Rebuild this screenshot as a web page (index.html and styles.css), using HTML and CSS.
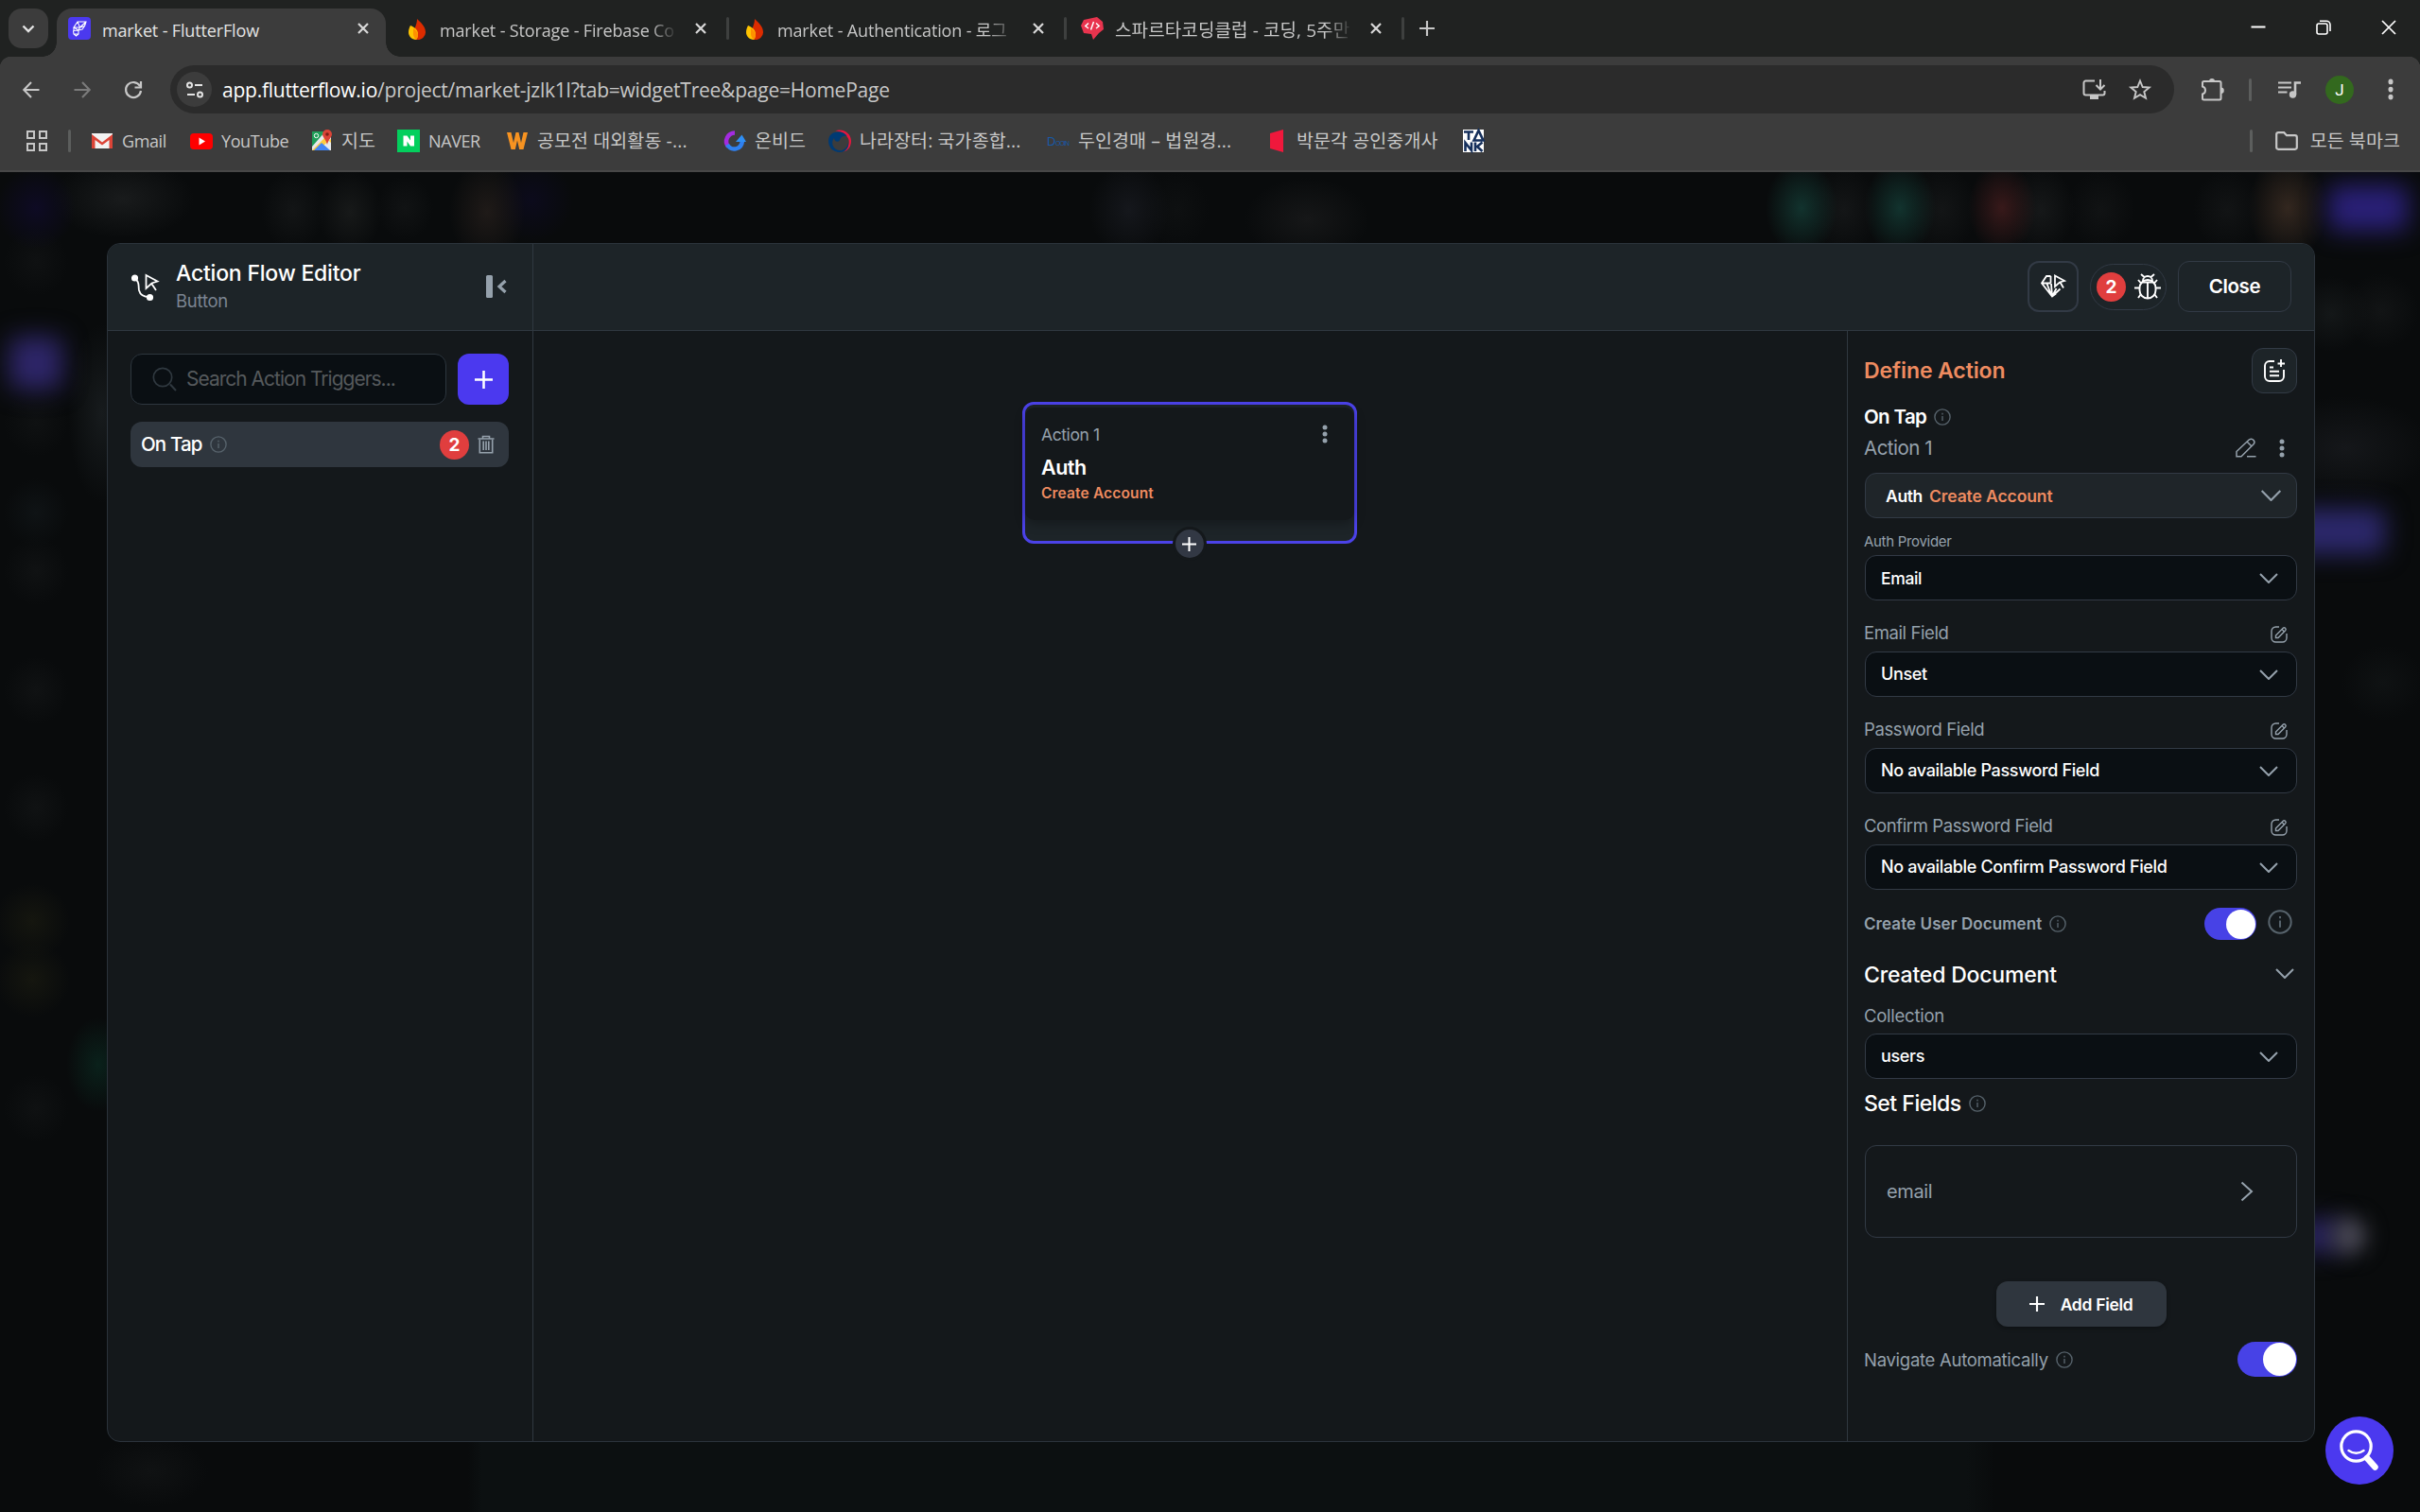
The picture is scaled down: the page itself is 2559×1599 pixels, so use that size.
FILE: index.html
```html
<!DOCTYPE html>
<html lang="ko">
<head>
<meta charset="utf-8">
<title>market - FlutterFlow</title>
<link rel="stylesheet" href="styles.css">
</head>
<body>
<svg class="defs" width="0" height="0" aria-hidden="true">
  <symbol id="x" viewBox="0 0 14 14"><path d="M2 2l10 10M12 2L2 12" fill="none" stroke="currentColor" stroke-width="2.2"/></symbol>
  <symbol id="fire" viewBox="0 0 18 22"><path d="M9 0c4 4 9 8 9 14a8 8 0 0 1-9 8c-3 0-4-2-4-5C5 11 9 7 9 0z" fill="#dd2c00"/><path d="M2 7c5 2 8 5 8 9 0 3-1 5-2 6-5 0-8-4-8-8 0-3 1-5 2-7z" fill="#ffc400"/><path d="M5 10c3 2 5 4 5 7 0 2-1 4-2 5-2-2-3-4-3-6z" fill="#ff9100"/></symbol>
  <symbol id="info" viewBox="0 0 18 18"><circle cx="9" cy="9" r="8.1" fill="none" stroke="currentColor" stroke-width="1.4"/><path d="M9 8v5M9 4.8v1.6" stroke="currentColor" stroke-width="1.4"/></symbol>
  <symbol id="down" viewBox="0 0 20 11"><path d="M1 1l9 9 9-9" fill="none" stroke="currentColor" stroke-width="2"/></symbol>
  <symbol id="plus" viewBox="0 0 18 18"><path d="M9 0v18M0 9h18" stroke="currentColor" stroke-width="2.4"/></symbol>
  <symbol id="dots" viewBox="0 0 6 20"><circle cx="3" cy="3" r="2.5" fill="currentColor"/><circle cx="3" cy="10" r="2.5" fill="currentColor"/><circle cx="3" cy="17" r="2.5" fill="currentColor"/></symbol>
  <symbol id="edit" viewBox="0 0 18 18"><path d="M9 1H5.500A4.500 4.500 0 0 0 1 5.500v7A4.500 4.500 0 0 0 5.500 17h7a4.500 4.500 0 0 0 4.500-4.500V8M5.500 12.500V10L13.200 2.200c1.500-1.400 3.900 1 2.500 2.500L8 12.500zM12 3.500L14.500 6" fill="none" stroke="currentColor" stroke-width="1.4"/></symbol>
</svg>

<div class="screen">
  <header class="tabstrip">
    <div class="tab-search"><svg width="14" height="9" viewBox="0 0 14 9"><path d="M1.500 1.500L7 7l5.500-5.500" fill="none" stroke="#e3e3e3" stroke-width="2.400"/></svg></div>
    <div class="tab active">
      <svg class="fav" viewBox="0 0 24 24"><rect width="24" height="24" rx="4" fill="#4b39ef"/><path d="M10 5h9l-1.500 4.500-5 1.500H6zM10 5L6 11v3.500l5-.5 1.500-3L10 5M12.500 11L19 5M5.500 14.500L6 18l2.500 2 2.500-2v-4M6 18h5M6 11l5 3 4-1 2.500-3.500" fill="none" stroke="#fff" stroke-width="1.100"/></svg>
      <span class="title ttl-1">market - FlutterFlow</span>
      <svg class="tab-x"><use href="#x"/></svg>
    </div>
    <div class="tab">
      <svg class="fav"><use href="#fire" x="3" y="2" width="18" height="22"/></svg>
      <span class="title fade">market - Storage - Firebase Co</span>
      <svg class="tab-x"><use href="#x"/></svg>
    </div>
    <div class="tab">
      <svg class="fav"><use href="#fire" x="3" y="2" width="18" height="22"/></svg>
      <span class="title fade">market - Authentication - 로그</span>
      <svg class="tab-x"><use href="#x"/></svg>
    </div>
    <div class="tab">
      <svg class="fav" viewBox="0 0 24 24"><path d="M3 3L17 0l6 5 1 8-5 4-6 7-2-6-8-1-3-8z" fill="#e8344e"/><path d="M8 6.500L4.800 9.500 8 12M16 6.500l3.200 3L16 12M13.500 5l-3 8.500" fill="none" stroke="#fff" stroke-width="1.500"/></svg>
      <span class="title fade ko">스파르타코딩클럽 - 코딩, 5주만</span>
      <svg class="tab-x"><use href="#x"/></svg>
    </div>
    <svg class="new-tab" width="16" height="16"><use href="#plus"/></svg>
    <div class="win">
      <svg width="16" height="16" viewBox="0 0 16 16"><path d="M.5 7.500h15" stroke="#fff" stroke-width="2"/></svg>
      <svg width="16" height="16" viewBox="0 0 16 16"><path d="M1 6a2 2 0 0 1 2-2h7a2 2 0 0 1 2 2v7a2 2 0 0 1-2 2H3a2 2 0 0 1-2-2zM4 1.200h7A4 4 0 0 1 15 5v7" fill="none" stroke="#fff" stroke-width="1.600"/></svg>
      <svg width="16" height="16" viewBox="0 0 16 16"><path d="M1 1l14 14M15 1L1 15" stroke="#fff" stroke-width="1.700"/></svg>
    </div>
  </header>

  <div class="toolbar">
    <nav class="nav">
      <svg viewBox="0 0 18 18"><path d="M17.500 9H1.500M9 1L1.300 9 9 17" fill="none" stroke="#c7c7c7" stroke-width="2.100"/></svg>
      <svg viewBox="0 0 18 18"><path d="M.5 9h16M9 1l7.700 8L9 17" fill="none" stroke="#7b7b7b" stroke-width="2.100"/></svg>
      <svg viewBox="0 0 18 18"><path d="M16 5A8 8 0 1 0 17 10M17 0v6.500h-6.500" fill="none" stroke="#c7c7c7" stroke-width="2.200"/></svg>
    </nav>
    <div class="omnibox">
      <div class="site"><svg width="18" height="18" viewBox="0 0 18 18" fill="none" stroke="#e3e3e3" stroke-width="2"><circle cx="3.500" cy="4" r="2.500"/><path d="M9 4h8M1 14h8"/><circle cx="14.500" cy="14" r="2.500"/></svg></div>
      <div class="url"><b>app.flutterflow.io</b>/project/market-jzlk1l?tab=widgetTree&amp;page=HomePage</div>
      <svg class="install" width="25" height="22" viewBox="0 0 25 22"><path d="M13 1.500H3.500A2 2 0 0 0 1.500 3.500v11a2 2 0 0 0 2 2h18a2 2 0 0 0 2-2V12M19 0v10M14.500 6l4.500 4.500L23.500 6" fill="none" stroke="#c7c7c7" stroke-width="2"/><path d="M8 17h9v4H8z" fill="#c7c7c7"/></svg>
      <svg class="star" width="24" height="23" viewBox="0 0 24 23"><path d="M12 2.500l2.700 6.500 7 .5-5.400 4.500 1.700 6.800-6-3.700-6 3.700 1.700-6.800L2.300 9.500l7-.5z" fill="none" stroke="#c7c7c7" stroke-width="1.900"/></svg>
    </div>
    <div class="tools">
      <svg class="t-ext" width="26" height="25" viewBox="0 0 26 25"><path d="M3.500 4H20a1.500 1.500 0 0 1 1.500 1.500V22a1.500 1.500 0 0 1-1.500 1.500H3.500A1.500 1.500 0 0 1 2 22v-4.500c4-1 4-7 0-8V5.500A1.500 1.500 0 0 1 3.500 4z" fill="none" stroke="#c7c7c7" stroke-width="2"/><path d="M9 4a3 3 0 0 1 6 0zM21.500 10.500a3 3 0 0 1 0 6.500z" fill="#c7c7c7"/></svg>
      <i class="bar"></i>
      <svg class="t-music" width="24" height="18" viewBox="0 0 24 18"><path d="M0 1.500h14M0 6.500h14M0 11.500h9.500" stroke="#c7c7c7" stroke-width="2"/><circle cx="15.500" cy="14" r="3.700" fill="#c7c7c7"/><path d="M18 14V1.500h6" fill="none" stroke="#c7c7c7" stroke-width="2.600"/></svg>
      <span class="avatar">J</span>
      <svg class="t-dots" width="6" height="23" viewBox="0 0 6 20" preserveAspectRatio="none"><use href="#dots"/></svg>
    </div>
  </div>

  <div class="bookmarks">
    <svg class="apps" width="22" height="22" viewBox="0 0 22 22" fill="none" stroke="#c7c7c7" stroke-width="2"><path d="M1 1h7v7H1zM14 1h7v7h-7zM1 14h7v7H1zM14 14h7v7h-7z"/></svg>
    <i class="bar"></i>
    <div class="marks">
      <span><svg viewBox="0 0 24 24"><path d="M1 4h22v16H1z" fill="#f2f2f2"/><path d="M1 20V5l11 8.500L23 5v15h-3.500V11L12 16.500 4.500 11v9z" fill="#db4437"/></svg><em class="g">Gmail</em></span>
      <span><svg viewBox="0 0 24 24"><rect y="4" width="24" height="17" rx="4" fill="#f00"/><path d="M9.500 8.500v8l6.500-4z" fill="#fff"/></svg><em class="g">YouTube</em></span>
      <span><svg viewBox="0 0 24 24"><path d="M2 2h20v20H2z" fill="#e8eaed"/><path d="M2 2h14L2 18z" fill="#1e9e58"/><path d="M2 22L16 8l6 6v-4L8 22z" fill="#ffcd40"/><path d="M4 22l8-8 9 8z" fill="#4285f4"/><path d="M18 0a5 5 0 0 1 5 5c0 3-4 6-5 11-1-5-5-8-5-11a5 5 0 0 1 5-5z" fill="#db4437"/><circle cx="18" cy="5" r="1.800" fill="#7c1f17"/><circle cx="6.500" cy="6.500" r="2.200" fill="none" stroke="#fff"/></svg><em>지도</em></span>
      <span><svg viewBox="0 0 24 24"><path d="M0 0h24v24H0z" fill="#03cf5d"/><path d="M6.500 6.500h4l3.500 5v-5h4v11h-4l-3.500-5v5h-4z" fill="#fff"/></svg><em class="g">NAVER</em></span>
      <span><svg viewBox="0 0 24 24"><path d="M1 3h4.500l2.500 11 2.500-11h3L16 14l2.500-11H23l-4.500 18h-4.300L12 11.500 9.800 21H5.500z" fill="#f79321"/></svg><em>공모전 대외활동 -...</em></span>
      <span><svg viewBox="0 0 24 24"><path d="M12 3.500A9 9 0 0 0 5 18" fill="none" stroke="#a32be0" stroke-width="4.500"/><path d="M4 16c4 7 15 6 16-4" fill="none" stroke="#2f80f0" stroke-width="4.500"/><path d="M13 13l6.500-7.500L24 13z" fill="#2f8ff5"/></svg><em>온비드</em></span>
      <span><svg viewBox="0 0 24 24"><path d="M7 1.500C14-2 24 3 24 12c0 6-3 10-8 11.500 5-4 7-9 5-14-3-6-9-8-14-8z" fill="#e5173f"/><path d="M5 3.500C11 1 18 3 19.500 7c-4-1-6.500 1-7.500 4-1 3-6 2-6-2-4 5-1 12 5 13 5 1 9-3 10-8 1 6-4 10-9 10C5 24 0 19 0 12c0-4 2-7 5-8.500z" fill="#003a73"/></svg><em>나라장터: 국가종합...</em></span>
      <span><svg viewBox="0 0 24 24"><text x="0" y="17" font-size="13" fill="#1859a8" font-family="Liberation Sans">D</text><text x="9" y="17" font-size="7" fill="#1859a8" font-family="Liberation Sans" textLength="15">OOIN</text></svg><em>두인경매 – 법원경...</em></span>
      <span><svg viewBox="0 0 24 24"><path d="M5 4l14-4v24L5 20z" fill="#f0183c"/></svg><em>박문각 공인중개사</em></span>
      <span><svg viewBox="0 0 24 24"><path d="M1 0h22v24H1z" fill="#fff"/><path d="M2 2.500h10M7 2.500V11M12.500 11.500L17.500 1l5 10.500zM3.500 23V14l6.500 8v-8.500M14 13.500V23M21.500 13.500L16 18l5.500 5" fill="none" stroke="#16305c" stroke-width="2.600"/></svg></span>
    </div>
    <i class="bar right"></i>
    <svg class="folder" width="24" height="20" viewBox="0 0 24 20"><path d="M1.200 3a2 2 0 0 1 2-1.800h6l2.800 3h8.800a2 2 0 0 1 2 2V17a2 2 0 0 1-2 1.800H3.200a2 2 0 0 1-2-1.800z" fill="none" stroke="#c7c7c7" stroke-width="2.200"/></svg>
    <em class="all">모든 북마크</em>
  </div>

  <main class="backdrop">
    <i class="ghost g-nav"></i><i class="ghost g-run"></i><i class="ghost g-tab"></i><i class="ghost g-switch"></i><i class="ghost g-knob"></i>
    <section class="dialog">
      <aside class="side">
        <div class="side-head">
          <svg width="30" height="30" viewBox="0 0 30 30" fill="none" stroke="#fff" stroke-width="1.800"><circle cx="4.500" cy="5" r="2.700" fill="#fff"/><circle cx="20.500" cy="25.500" r="2.700" fill="#fff"/><path d="M5 6c5 3 3 7 4 12 1 4 5 7 11 7M16.500 2l12 6.500-6 2-6 5.500zM22 10.500l5 7.500"/></svg>
          <div class="heads"><h1>Action Flow Editor</h1><p>Button</p></div>
          <svg class="collapse" width="22" height="26" viewBox="0 0 22 26"><rect x="0" y="1" width="7" height="24" rx="1.500" fill="#95a1ac"/><path d="M20.500 7l-6.500 6 6.500 6" fill="none" stroke="#95a1ac" stroke-width="3.200"/></svg>
        </div>
        <div class="side-body">
          <div class="search-row">
            <div class="search"><svg width="26" height="26" viewBox="0 0 26 26"><path d="M19 18.500l6 6.500" stroke="#2f383f" stroke-width="2"/><circle cx="11" cy="11" r="9.700" fill="none" stroke="#2f383f" stroke-width="1.700"/></svg><span>Search Action Triggers...</span></div>
            <button class="add"><svg width="19" height="19"><use href="#plus"/></svg></button>
          </div>
          <div class="trigger"><span>On Tap</span><svg class="i dim"><use href="#info"/></svg><b class="badge">2</b><svg class="trash" width="18" height="20" viewBox="0 0 18 20" fill="none" stroke="#95a1ac" stroke-width="1.600"><path d="M.5 4h17M5.500 4V1.500h7V4M2.300 5v13.800h13.400V5M6.200 6.500v9.500M9 6.500v9.500M11.800 6.500v9.500"/></svg></div>
        </div>
      </aside>
      <div class="work">
        <div class="work-head">
          <button class="sq"><svg width="26" height="26" viewBox="0 0 26 26" fill="none" stroke="#fff" stroke-width="1.800"><path d="M10.500 2H6L1 9.500l11 14 4-3M1 9.500h9.500M10.500 2v7.500M6.500 10l5 13M11 10l1 13.500M15 1.500l10 5.500-5 1.500-5 4.500zM20.500 8.500l3.500 6M16.500 15L12 23.500 20.500 15.500"/></svg></button>
          <div class="pill"><b class="badge">2</b><svg width="28" height="28" viewBox="0 0 28 28" fill="none" stroke="#fff" stroke-width="1.900"><rect x="5.500" y="7" width="17" height="19.500" rx="8.500"/><path d="M14 9v17M9 8a5 5 0 0 1 10 0M7 1l3.500 3M21 1l-3.500 3M0 15.500h5.500M22.500 15.500H28M7 10.500L4 7M21 10.500L24 7M7 22l-3 4M21 22l3 4M8 9.500h12"/></svg></div>
          <button class="close">Close</button>
        </div>
        <div class="work-body">
          <div class="canvas">
            <div class="node">
              <div class="node-in">
                <div class="node-top"><span>Action 1</span><svg width="6" height="20"><use href="#dots"/></svg></div>
                <h2>Auth</h2>
                <h3>Create Account</h3>
              </div>
              <span class="node-add"><svg width="15" height="15"><use href="#plus"/></svg></span>
            </div>
          </div>
          <div class="panel">
            <div class="define"><span>Define Action</span><button><svg width="24" height="24" viewBox="0 0 24 24" fill="none" stroke="#fff" stroke-width="1.900"><path d="M12 2H7a5 5 0 0 0-5 5v11a5 5 0 0 0 5 5h10a5 5 0 0 0 5-5V11M19 0v8M15.500 4.500H23M7 8.500h4M7 12.800h10M7 17.300h10"/></svg></button></div>
            <div class="row r-tap"><span>On Tap</span><svg class="i"><use href="#info"/></svg></div>
            <div class="row r-action"><span>Action 1</span><svg class="pen" width="22" height="21" viewBox="0 0 22 21" fill="none" stroke="#95a1ac" stroke-width="1.500"><path d="M1 14.500L14.500 1.800c3.500-2 7 2 4.500 5L6 19.800H1zM12 4l5 5M12 19.800h9.500"/></svg><svg width="6" height="20"><use href="#dots"/></svg></div>
            <div class="box act"><span>Auth</span><em>Create Account</em><svg class="chev big"><use href="#down"/></svg></div>
            <div class="label small"><span>Auth Provider</span></div>
            <div class="box"><span class="v1">Email</span><svg class="chev"><use href="#down"/></svg></div>
            <div class="label"><span>Email Field</span><svg class="i"><use href="#edit"/></svg></div>
            <div class="box"><span>Unset</span><svg class="chev"><use href="#down"/></svg></div>
            <div class="label"><span>Password Field</span><svg class="i"><use href="#edit"/></svg></div>
            <div class="box"><span>No available Password Field</span><svg class="chev"><use href="#down"/></svg></div>
            <div class="label"><span>Confirm Password Field</span><svg class="i"><use href="#edit"/></svg></div>
            <div class="box"><span>No available Confirm Password Field</span><svg class="chev"><use href="#down"/></svg></div>
            <div class="row r-create"><span>Create User Document</span><svg class="i"><use href="#info"/></svg><i class="toggle t1"></i><svg class="i lg"><use href="#info"/></svg></div>
            <div class="row r-created"><span>Created Document</span><svg class="chev"><use href="#down"/></svg></div>
            <div class="label coll"><span>Collection</span></div>
            <div class="box"><span>users</span><svg class="chev"><use href="#down"/></svg></div>
            <div class="row r-set"><span>Set Fields</span><svg class="i"><use href="#info"/></svg></div>
            <div class="box field"><span>email</span><svg width="14" height="22" viewBox="0 0 14 22"><path d="M1.500 1.500L12 11 1.500 20.500" fill="none" stroke="#95a1ac" stroke-width="2"/></svg></div>
            <button class="add-field"><svg width="16" height="16"><use href="#plus"/></svg>Add Field</button>
            <div class="row r-nav"><span>Navigate Automatically</span><svg class="i"><use href="#info"/></svg><i class="toggle t2"></i></div>
          </div>
        </div>
      </div>
    </section>
    <span class="fab"><svg width="42" height="44" viewBox="0 0 42 44" fill="none" stroke="#fff" stroke-linecap="round"><circle cx="17.500" cy="17.500" r="15.700" stroke-width="3.200"/><path d="M9.500 22q8 5.500 16 0" stroke-width="2.400"/><path d="M29 30l8.500 9.500" stroke-width="6.500"/></svg></span>
  </main>
</div>
</body>
</html>
```
FILE: styles.css
```css
* { box-sizing: border-box; }
body { margin: 0; background: #090b0c; overflow: hidden; }
svg { display: block; flex: none; overflow: visible; }
.defs { position: absolute; }
h1, h2, h3, p { margin: 0; }
em, i { font-style: normal; }
button { border: 0; padding: 0; font: inherit; color: inherit; background: none; }
.screen { width: 2559px; height: 1599px; display: flex; flex-direction: column; font-family: "Open Sans", "Noto Sans CJK KR", sans-serif; }

/* Browser tabs */
.tabstrip { height: 60px; background: #202221; display: flex; align-items: flex-start; padding-left: 9px; }
.tab-search { width: 42px; height: 42px; margin: 9px 9px 0 0; border-radius: 14px; background: #3c3c3c; display: flex; align-items: center; justify-content: center; }
.tab { position: relative; width: 357px; height: 51px; margin-top: 9px; padding: 9px 21px 0 12px; display: flex; gap: 12px; }
.tab::after { content: ""; position: absolute; left: 351px; top: 9px; width: 3px; height: 24px; border-radius: 2px; background: #3e403f; }
.tab.active { width: 348px; margin-right: 9px; padding-right: 12px; background: #3c3c3c; border-radius: 16px 16px 0 0; }
.tab.active::before, .tab.active::after { content: ""; position: absolute; top: auto; bottom: 0; width: 15px; height: 15px; border-radius: 0; background: radial-gradient(circle at 0 0, transparent 14.5px, #3c3c3c 15px); }
.tab.active::before { left: -15px; }
.tab.active::after { left: auto; right: -15px; transform: scaleX(-1); }
.fav { width: 24px; height: 24px; }
.title { width: 252px; flex: none; height: 32px; line-height: 29px; font-size: 18px; letter-spacing: -.15px; color: #c7c7c7; white-space: nowrap; overflow: hidden; }
.ttl-1 { color: #e3e3e3; }
.ko { font-size: 19px; letter-spacing: .1px; }
.fade { -webkit-mask-image: linear-gradient(90deg, #000 88%, transparent); mask-image: linear-gradient(90deg, #000 88%, transparent); }
.tab-x { width: 14px; height: 14px; margin: 5px; color: #d8d8d8; }
.new-tab { margin: 22px 0 0 13px; color: #c7c7c7; }
.win { margin: 21px 25px 0 auto; display: flex; gap: 53px; }

/* Address row */
.toolbar { height: 69px; flex: none; display: flex; align-items: flex-start; padding-top: 9px; background: radial-gradient(circle at 12px 12px, #3c3c3c 12px, transparent 12.5px) 0 0 / 12px 12px no-repeat, radial-gradient(circle at 0 12px, #3c3c3c 12px, transparent 12.5px) 100% 0 / 12px 12px no-repeat, linear-gradient(#3c3c3c, #3c3c3c) 0 12px / 100% 100% no-repeat, linear-gradient(#3c3c3c, #3c3c3c) 12px 0 / 2535px 12px no-repeat, #202221; }
.nav { width: 180px; display: flex; gap: 36px; padding: 17px 0 0 24px; }
.nav svg { width: 18px; height: 18px; }
.omnibox { width: 2119px; height: 51px; border-radius: 26px; background: #2b2b2b; display: flex; align-items: center; padding-left: 7px; }
.site { width: 37px; height: 37px; border-radius: 50%; background: #3c3c3c; display: flex; align-items: center; justify-content: center; }
.url { margin-left: 11px; font-size: 21px; letter-spacing: -.23px; color: #c7c7c7; white-space: nowrap; }
.url b { font-weight: 400; color: #fff; }
.install { margin-left: auto; }
.star { margin: 0 24px; }
.tools { display: flex; align-items: center; height: 51px; padding-left: 28px; }
.bar { width: 3px; height: 24px; border-radius: 2px; background: #5c5e5d; flex: none; }
.t-music { margin-left: 28px; }
.tools .bar { margin-left: 25px; }
.avatar { width: 30px; height: 30px; margin-left: 26px; border-radius: 50%; background: #33691e; color: #fff; font: 17px/30px Roboto, sans-serif; text-align: center; }
.t-dots { margin-left: 36px; color: #c7c7c7; }

/* Bookmarks */
.bookmarks { height: 53px; flex: none; display: flex; align-items: center; padding: 0 21px 11px 28px; background: #3c3c3c; border-bottom: 2px solid #474747; }
.bookmarks em { font-size: 19.5px; color: #c7c7c7; line-height: 26px; white-space: nowrap; letter-spacing: .1px; }
.bookmarks .g { font-size: 18px; letter-spacing: -.4px; }
.apps { margin-right: 22px; }
.marks { flex: 1; margin-left: 21px; display: grid; grid-template-columns: 105px 127px 92px 115px 230px 111px 231px 231px 208px 24px; }
.marks span { display: flex; align-items: center; gap: 9px; }
.marks svg { width: 24px; height: 24px; }
.folder { margin: 0 13px 0 24px; }

/* Dimmed, blurred editor behind the dialog */
.backdrop {
  position: relative; flex: 1; padding: 75px 0 0 113px; overflow: hidden;
  background:
    radial-gradient(42px 44px at 38px 38px, #0e0b24, transparent),
    radial-gradient(75px 42px at 130px 28px, #191b1c, transparent),
    radial-gradient(34px 42px at 310px 40px, #131516, transparent),
    radial-gradient(34px 44px at 370px 42px, #171919, transparent),
    radial-gradient(30px 34px at 428px 38px, #111314, transparent),
    radial-gradient(40px 56px at 515px 42px, #1f1a18, transparent),
    radial-gradient(44px 44px at 562px 30px, #0c0b1c, transparent),
    radial-gradient(36px 95px at 108px 255px, #171b1d, transparent),
    radial-gradient(34px 36px at 38px 95px, #0f1112, transparent),
    radial-gradient(34px 36px at 38px 265px, #0f1112, transparent),
    radial-gradient(34px 36px at 38px 360px, #0f1315, transparent),
    radial-gradient(34px 36px at 38px 422px, #101213, transparent),
    radial-gradient(34px 36px at 38px 548px, #101213, transparent),
    radial-gradient(34px 36px at 38px 672px, #101213, transparent),
    radial-gradient(40px 40px at 34px 792px, #15160f, transparent),
    radial-gradient(40px 40px at 34px 854px, #15160f, transparent),
    radial-gradient(34px 36px at 38px 990px, #0f1112, transparent),
    radial-gradient(34px 50px at 104px 944px, #0a211b, transparent),
    radial-gradient(60px 38px at 160px 1374px, #101213, transparent),
    radial-gradient(42px 50px at 1194px 40px, #15171c, transparent),
    radial-gradient(34px 40px at 1245px 40px, #0e1011, transparent),
    radial-gradient(66px 44px at 1382px 50px, #161718, transparent),
    radial-gradient(38px 50px at 1905px 38px, #12332e, transparent),
    radial-gradient(36px 46px at 1950px 40px, #141617, transparent),
    radial-gradient(38px 50px at 2009px 38px, #12332e, transparent),
    radial-gradient(36px 46px at 2054px 40px, #131516, transparent),
    radial-gradient(36px 48px at 2117px 38px, #38191a, transparent),
    radial-gradient(36px 46px at 2158px 40px, #161819, transparent),
    radial-gradient(36px 42px at 2222px 40px, #111314, transparent),
    radial-gradient(36px 42px at 2355px 40px, #121415, transparent),
    radial-gradient(42px 56px at 2419px 38px, #33271f, transparent),
    radial-gradient(40px 40px at 2465px 150px, #141718, transparent),
    radial-gradient(40px 40px at 2518px 147px, #121415, transparent),
    radial-gradient(90px 55px at 2480px 292px, #15171a, transparent),
    radial-gradient(44px 40px at 2520px 540px, #0f1213, transparent),
    linear-gradient(90deg, transparent 495px, #0c1011 510px 2080px, transparent 2110px) 0 1300px / 100% 117px no-repeat,
    #090b0c;
}
.ghost { position: absolute; filter: blur(13px); }
.g-nav { left: 10px; top: 174px; width: 56px; height: 56px; border-radius: 10px; background: #2e2669; }
.g-run { left: 2462px; top: 14px; width: 84px; height: 48px; border-radius: 8px; background: #2a2078; }
.g-tab { left: 2400px; top: 356px; width: 122px; height: 48px; border-radius: 8px; background: #2c286c; }
.g-switch { left: 2410px; top: 1108px; width: 66px; height: 34px; background: #29235e; }
.g-knob { left: 2466px; top: 1106px; width: 36px; height: 38px; border-radius: 50%; background: #4b4a56; filter: blur(11px); }

/* Dialog */
.dialog { position: relative; width: 2335px; height: 1268px; border: 1px solid #2b333b; border-radius: 14px; overflow: hidden; display: flex; background: #14181b; color: #fff; font-family: Inter, "Noto Sans", sans-serif; }
.side { width: 450px; flex: none; border-right: 1px solid #2f3840; }
.side-head, .work-head { height: 92px; background: #1d2428; border-bottom: 1px solid #2f3840; display: flex; align-items: center; }
.side-head { padding: 0 27px 0 24px; }
.heads { margin: -1px 0 0 18px; }
h1 { font-size: 23px; line-height: 30px; font-weight: 500; letter-spacing: -.21px; }
p { font-size: 18.5px; line-height: 28px; color: #7b8491; letter-spacing: -.25px; }
.collapse { margin: -2px 0 0 auto; }
.side-body { padding: 24px; }
.search-row { display: flex; gap: 12px; }
.search { width: 334px; height: 54px; border: 1px solid #2d363e; border-radius: 12px; background: #0a0f13; display: flex; align-items: center; padding: 0 0 1px 22px; gap: 10px; color: #55595c; font-size: 21px; letter-spacing: -1px; white-space: nowrap; }
.add { width: 54px; height: 54px; border-radius: 12px; background: #4b39ef; display: grid; place-items: center; }
.trigger { width: 400px; margin-top: 18px; height: 48px; border-radius: 12px; background: #2f363e; display: flex; align-items: center; padding: 0 15px 0 12px; font-size: 20.5px; font-weight: 500; letter-spacing: -.85px; }
.i { width: 18px; height: 18px; color: #57636c; }
.trigger span { margin: -2px 0 0 -1px; }
.trigger .i { margin-left: 8px; }
.badge { width: 31px; height: 31px; border-radius: 50%; background: #e03e3e; font-size: 19px; line-height: 31px; font-weight: 700; letter-spacing: 0; text-align: center; }
.trigger .badge { margin-left: auto; margin-right: 9px; }

.work { flex: 1; display: flex; flex-direction: column; }
.work-head { justify-content: flex-end; padding-right: 24px; gap: 12px; padding-bottom: 1px; }
.sq { width: 54px; height: 54px; border: 2px solid #323a45; border-radius: 12px; display: grid; place-items: center; }
.pill { width: 81px; height: 49px; border: 1px solid #323a45; border-radius: 25px; display: flex; align-items: center; padding-left: 6px; gap: 9px; }
.close { width: 120px; height: 54px; border: 1px solid #323a45; border-radius: 12px; font-size: 20.5px; font-weight: 600; letter-spacing: -.4px; padding-bottom: 2px; }
.work-body { flex: 1; display: flex; }

.canvas { flex: 1; display: flex; justify-content: center; align-items: flex-start; padding: 75px 1px 0 0; }
.node { position: relative; width: 354px; height: 150px; border: 3px solid #4b42e8; border-radius: 12px; background: #1d2428; padding-top: 3px; }
.node-in { height: 119px; border-radius: 10px; background: #14181b; box-shadow: 0 4px 12px rgba(0, 0, 0, .3); padding: 16px 28px 0 17px; }
.node-top { display: flex; justify-content: space-between; align-items: center; height: 24px; font-size: 17.5px; letter-spacing: -.4px; color: #95a1ac; }
h2 { font-size: 21.5px; line-height: 34px; padding-top: 6px; font-weight: 600; letter-spacing: -.5px; }
h3 { font-size: 15.5px; line-height: 22px; font-weight: 600; letter-spacing: .15px; color: #ee8b60; }
.node-add { position: absolute; left: 155.500px; top: 129px; width: 36px; height: 36px; border: 3px solid #14181b; border-radius: 50%; background: #323844; display: grid; place-items: center; }

/* Properties */
.panel { width: 494px; flex: none; border-left: 1px solid #2f3840; padding: 18px 18px 0; }
.panel span { margin-left: -1px; }
.define { height: 48px; display: flex; align-items: center; justify-content: space-between; color: #ee8b60; font-size: 23px; font-weight: 600; letter-spacing: -.1px; }
.define button { width: 48px; height: 48px; border: 1px solid #323a45; border-radius: 12px; background: #1d2428; display: grid; place-items: center; }
.row { display: flex; align-items: center; white-space: nowrap; }
.row .i { margin-left: 8px; }
.r-tap { margin-top: 8px; height: 33px; font-size: 20.5px; font-weight: 600; letter-spacing: -.65px; }
.r-action { height: 34px; margin-bottom: 9px; font-size: 20.5px; letter-spacing: -.5px; color: #95a1ac; padding: 0 13px 1px 0; }
.pen { margin: 0 24px 0 auto; }
.box { height: 48px; border: 1px solid #323a45; border-radius: 12px; background: #0a0f13; display: flex; align-items: center; padding: 0 19px 0 17px; font-size: 18px; font-weight: 500; letter-spacing: -.35px; white-space: nowrap; }
.box span { margin-top: -1px; }
.chev { width: 20px; height: 11px; margin-left: auto; color: #95a1ac; }
.chev.big { width: 23px; height: 12px; }
.box .v1 { font-size: 17.500px; margin-top: 1px; }
.act { background: #1f2529; padding: 0 15px 0 22px; font-size: 17.500px; font-weight: 600; gap: 7px; }
.act span { margin-top: 0; }
.act em { color: #ee8b60; letter-spacing: -.1px; }
.label { height: 54px; padding: 14px 10px 0 0; display: flex; align-items: center; justify-content: space-between; font-size: 18.5px; letter-spacing: -.4px; color: #95a1ac; }
.label .i { color: #95a1ac; margin-top: 4px; }
.label.small { height: 39px; padding-top: 10px; font-size: 15px; letter-spacing: -.3px; }
.label.coll { height: 46px; padding-top: 8px; letter-spacing: -.25px; }
.r-create { height: 73px; font-size: 17px; font-weight: 600; letter-spacing: .08px; color: #95a1ac; padding: 0 5px 1px 0; }
.row .lg { width: 26px; height: 26px; margin: -4px 0 0 12px; }
.toggle { margin-left: auto; background: #4742e6; display: flex; justify-content: flex-end; align-items: center; padding-right: 1px; }
.toggle::after { content: ""; border-radius: 50%; background: #fff; }
.t1 { width: 55px; height: 34px; border-radius: 17px; }
.t1::after { width: 31px; height: 31px; }
.t2 { width: 63px; height: 37px; border-radius: 19px; }
.t2::after { width: 35px; height: 35px; }
.r-created { height: 33px; font-size: 23px; font-weight: 500; letter-spacing: -.18px; padding-right: 3px; }
.r-created .chev { margin-top: -2px; }
.r-set { height: 52px; margin-bottom: 18px; font-size: 23px; font-weight: 500; letter-spacing: -.5px; }
.box.field { height: 98px; background: none; padding: 0 45px 0 23px; justify-content: space-between; font-size: 20px; font-weight: 400; color: #95a1ac; }
.add-field { width: 180px; height: 48px; margin: 46px auto 0; border-radius: 12px; background: #2f363e; display: flex; align-items: center; justify-content: center; gap: 17px; font-size: 17.5px; font-weight: 600; letter-spacing: -.3px; box-shadow: 0 2px 4px rgba(0, 0, 0, .3); }
.r-nav { height: 69px; font-size: 18.5px; letter-spacing: -.28px; color: #95a1ac; }

.fab { position: absolute; left: 2459px; top: 1316px; width: 72px; height: 72px; border-radius: 50%; background: #4b39ef; display: grid; place-items: center; }
```
